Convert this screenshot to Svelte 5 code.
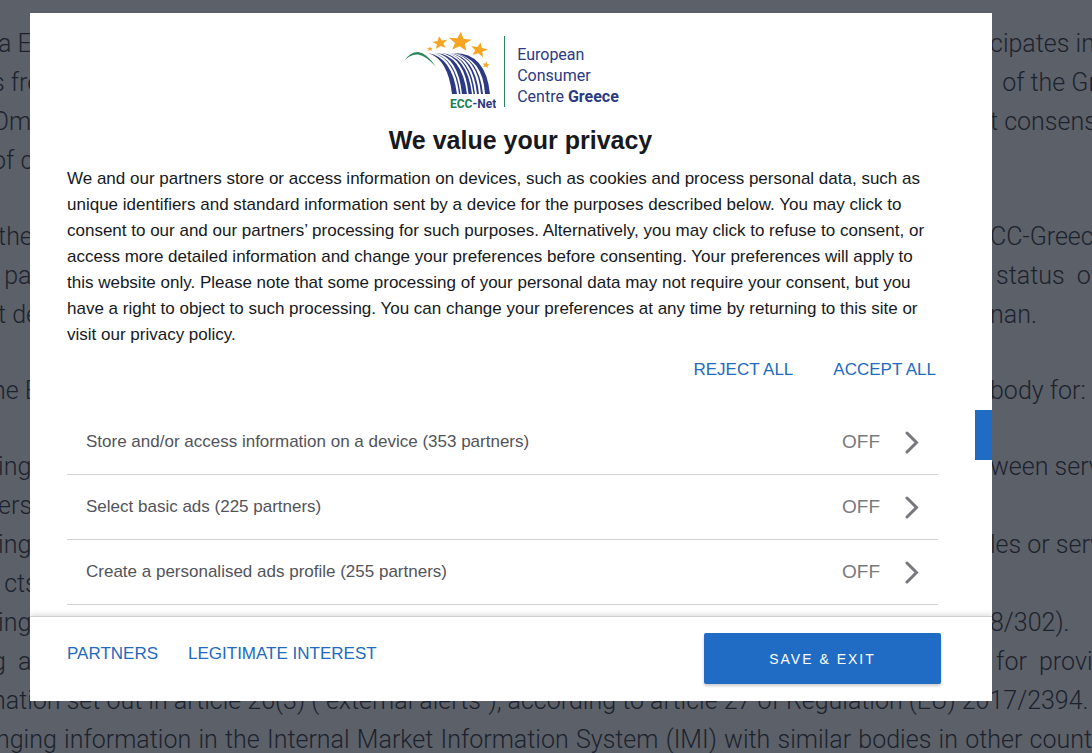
<script lang="ts">
	type Line = { left?: string; right?: string; full?: string };

	const article: Line[][] = [
		[
			{ left: ' a EC', right: 'cipates in' },
			{ left: 's fro', right: '  of the Gr' },
			{ left: 'Omb', right: 't consens' },
			{ left: 'of co' }
		],
		[
			{ left: ' the', right: 'CC-Greece' },
			{ left: '  par', right: ' status  of' },
			{ left: ' t de', right: 'nan.' }
		],
		[{ left: 'ne E', right: 'body for:' }],
		[
			{ left: ' ing', right: 'ween serv' },
			{ left: ' ers' },
			{ left: ' ing', right: 'les or serv' },
			{ left: '  cts' },
			{ left: ' ing', right: '8/302).' },
			{ left: 'g  a', right: ' for  provid' },
			{ full: 'nation set out in article 26(3) (“external alerts”), according to article 27 of Regulation (EU) 2017/2394.' },
			{ full: 'nging information in the Internal Market Information System (IMI) with similar bodies in other count' }
		]
	];

	const purposes = [
		{ name: 'Store and/or access information on a device', partners: 353 },
		{ name: 'Select basic ads', partners: 225 },
		{ name: 'Create a personalised ads profile', partners: 255 }
	];

	const stars = [
		{ x: 461, y: 42, r: 12, turn: 5 },
		{ x: 441, y: 43, r: 8, turn: -8 },
		{ x: 480, y: 50, r: 9, turn: 12 },
		{ x: 431, y: 49, r: 3, turn: 0 },
		{ x: 487, y: 65, r: 4, turn: 10 }
	];

	function starPoints(r: number) {
		return Array.from({ length: 10 }, (_, i) => {
			const radius = i % 2 ? r * 0.43 : r;
			const angle = (Math.PI * i) / 5;
			return `${radius * Math.sin(angle)},${-radius * Math.cos(angle)}`;
		}).join(' ');
	}
</script>

<div class="page">
	<div class="article">
		{#each article as block}
			<div class="block">
				{#each block as line}
					{#if line.full}
						<p class="line full">{line.full}</p>
					{:else}
						<p class="line">
							<span class="left">{line.left}</span>
							<span class="right">{line.right ?? ''}</span>
						</p>
					{/if}
				{/each}
			</div>
		{/each}
	</div>

	<div class="overlay">
		<div class="dialog" role="dialog" aria-labelledby="title">
			<div class="content">
				<div class="logo">
					<svg width="93" height="80" viewBox="404 31 93 80" aria-hidden="true">
						<path d="M405 61Q411 52 419 52Q428 53 437 67Q427 55.500 419 54.500Q411 54 405 61Z" fill="#2b8759" />
						<g fill="#2c3a83">
							<path d="M429 53Q449 59 453 94H458Q453 57 429 53Z" />
							<path d="M434 53Q456 59 460 94H461.500Q457 58 434 53Z" />
							<path d="M437 53Q459 57 463 94H468Q463 55 437 53Z" />
							<path d="M442 53Q466 57 469.500 94H473Q468 55 442 53Z" />
							<path d="M447 53Q470 57 474.500 94H476Q472 57 447 53Z" />
							<path d="M450 53Q474 57 478 94H480Q476 56 450 53Z" />
							<path d="M453 53Q479 57 482 94H484Q480 56 453 53Z" />
							<path d="M455 53Q484 58 486 94H491Q487 53 455 53Z" />
						</g>
						{#each stars as star}
							<polygon
								points={starPoints(star.r)}
								transform="translate({star.x} {star.y}) rotate({star.turn}) scale(1 0.85)"
								fill="#f6a522"
							/>
						{/each}
						<text class="mark" x="451" y="108" fill="#16804f">ECC<tspan fill="#2c3a83">-Net</tspan></text>
					</svg>
					<div class="logo-name">
						European<br />Consumer<br />Centre <b>Greece</b>
					</div>
				</div>

				<h1 id="title">We value your privacy</h1>
				<p class="intro">
					We and our partners store or access information on devices, such as cookies and process personal data, such as<br />
					unique identifiers and standard information sent by a device for the purposes described below. You may click to<br />
					consent to our and our partners’ processing for such purposes. Alternatively, you may click to refuse to consent, or<br />
					access more detailed information and change your preferences before consenting. Your preferences will apply to<br />
					this website only. Please note that some processing of your personal data may not require your consent, but you<br />
					have a right to object to such processing. You can change your preferences at any time by returning to this site or<br />
					visit our privacy policy.
				</p>

				<div class="choices">
					<button class="link">REJECT ALL</button>
					<button class="link">ACCEPT ALL</button>
				</div>

				<ul class="purposes">
					{#each purposes as purpose}
						<li>
							<button class="purpose">
								<span class="name">{purpose.name} ({purpose.partners} partners)</span>
								<span class="state">OFF</span>
								<svg width="14" height="24" viewBox="0 0 14 24" aria-hidden="true">
									<path d="M2 3L11.500 12.500L2 22" fill="none" stroke="#77787c" stroke-width="3" stroke-linecap="round" />
								</svg>
							</button>
						</li>
					{/each}
				</ul>
			</div>

			<div class="footer">
				<button class="link">PARTNERS</button>
				<button class="link">LEGITIMATE INTEREST</button>
				<button class="save">SAVE &amp; EXIT</button>
			</div>
			<div class="tab"></div>
		</div>
	</div>
</div>

<style>
	:global(body) {
		background: #5c6068;
	}

	.page {
		position: relative;
		height: 100vh;
		overflow: hidden;
		font-family: 'Liberation Sans', Arial, sans-serif;
	}

	.article {
		margin-left: -8px;
		padding-top: 24px;
		color: #1d232e;
		font-family: Roboto, sans-serif;
		font-size: 25px;
		font-weight: 300;
		line-height: 39px;
	}

	.block {
		margin-bottom: 37px;
	}

	.line {
		display: flex;
		margin: 0;
		height: 39px;
		white-space: pre;
	}

	.left {
		flex: 1;
	}

	.right {
		width: 102px;
	}

	.full {
		display: block;
		white-space: nowrap;
	}

	.full:last-child {
		padding-left: 4px;
		white-space: normal;
		text-align-last: justify;
	}

	.overlay {
		position: absolute;
		inset: 0;
		display: flex;
		padding: 13px 100px 52px 30px;
	}

	.dialog {
		position: relative;
		flex: 1;
		display: flex;
		flex-direction: column;
		background: #fff;
	}

	.content {
		flex: 1;
		min-height: 0;
		overflow: hidden;
		padding: 18px 37px 0;
	}

	.logo {
		display: flex;
		justify-content: center;
		gap: 8px;
	}

	.mark {
		font: bold 12px Roboto, sans-serif;
	}

	.logo-name {
		align-self: center;
		padding: 8px 0 0 12px;
		border-left: 1px solid #2b8759;
		color: #2c3a83;
		font-family: Roboto, sans-serif;
		font-size: 16px;
		line-height: 21px;
	}

	h1 {
		margin: 14px 18px 11px 37px;
		color: #16191d;
		font-size: 25px;
		line-height: 30px;
		text-align: center;
	}

	.intro {
		margin: 0;
		color: #16191d;
		font-size: 17px;
		line-height: 26px;
	}

	button {
		padding: 0;
		border: 0;
		background: none;
		font: inherit;
		cursor: pointer;
	}

	.link {
		color: #226abf;
		font-size: 17px;
		line-height: 24px;
	}

	.choices {
		display: flex;
		justify-content: flex-end;
		gap: 40px;
		padding: 10px 19px 28px 0;
	}

	.purposes {
		margin: 0 17px 0 0;
		padding: 0;
		list-style: none;
	}

	.purposes li {
		border-bottom: 1px solid #d2d3d5;
	}

	.purpose {
		display: flex;
		align-items: center;
		width: 100%;
		height: 64px;
		padding: 0 19px;
		color: #52545a;
		font-size: 17px;
		text-align: left;
	}

	.name {
		flex: 1;
	}

	.state {
		margin-right: 25px;
		color: #797a7e;
		font-size: 19px;
	}

	.footer {
		z-index: 1;
		display: flex;
		align-items: flex-start;
		gap: 30px;
		height: 84px;
		padding: 0 51px 0 37px;
		border-top: 1px solid #d0d0d0;
		background: #fff;
		box-shadow: 0 -2px 5px rgba(0, 0, 0, 0.12);
		clip-path: inset(-10px 0 0 0);
	}

	.footer .link {
		margin-top: 25px;
	}

	.save {
		width: 237px;
		height: 51px;
		margin: 16px 0 0 auto;
		border-radius: 2px;
		background: #206cc5;
		box-shadow: 0 2px 3px rgba(0, 0, 0, 0.2);
		color: #fff;
		font-size: 14px;
		letter-spacing: 2px;
	}

	.tab {
		position: absolute;
		top: 397px;
		right: 0;
		width: 17px;
		height: 50px;
		background: #206cc5;
	}
</style>
